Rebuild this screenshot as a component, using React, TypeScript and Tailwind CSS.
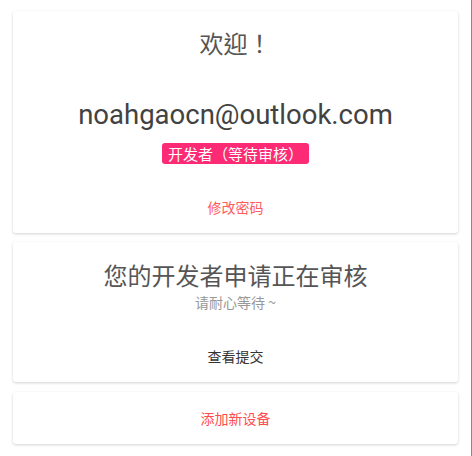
import React from "react";

const cjk = { fontFamily: '"Noto Sans CJK SC", Roboto, sans-serif' };
const latin = { fontFamily: 'Roboto, "Noto Sans CJK SC", sans-serif' };
const tc = { fontFamily: '"Noto Sans CJK TC", "Noto Sans CJK SC", sans-serif' };

const Card = ({ children, className = "" }: { children: React.ReactNode; className?: string }) => (
  <div className={`bg-white rounded-[3px] shadow-[0_1px_3px_rgba(0,0,0,0.18)] flex flex-col items-center ${className}`}>
    {children}
  </div>
);

export default function App() {
  return (
    <div className="w-[472px] h-[456px] bg-white border-r border-[#8a8a8a] flex flex-col px-[13px] pt-[11px] gap-[9px]" style={cjk}>
      <Card className="pt-[16px] pb-[16px]">
        <h2 className="text-[24px] leading-[32px] text-[#555]" style={tc}>欢迎！</h2>
        <div className="mt-[38px] text-[27.5px] leading-[36px] text-[#424242]" style={latin}>
          noahgaocn@outlook.com
        </div>
        <span className="mt-[10px] bg-[#fd2a75] text-white text-[15px] leading-[21px] px-[6px] rounded-[3px]" style={tc}>
          开发者（等待审核）
        </span>
        <button className="mt-[33px] text-[14px] leading-[20px] text-[#ff5c5c]">修改密码</button>
      </Card>

      <Card className="pt-[17px] pb-[16px]">
        <h2 className="text-[24px] leading-[32px] text-[#555]">您的开发者申请正在审核</h2>
        <p className="mt-[1px] text-[14px] leading-[20px] text-[#999]">请耐心等待 ~</p>
        <button className="mt-[34px] text-[14px] leading-[20px] text-[#333]">查看提交</button>
      </Card>

      <Card className="py-[16px] mt-[1px]">
        <button className="text-[14px] leading-[20px] text-[#ff4d4f]">添加新设备</button>
      </Card>
    </div>
  );
}
